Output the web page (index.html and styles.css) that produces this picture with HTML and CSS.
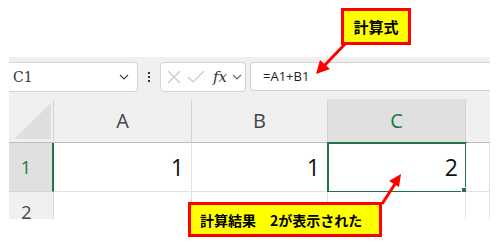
FILE: index.html
```html
<!DOCTYPE html>
<html lang="ja">
<head>
  <meta charset="UTF-8">
  <title>計算式</title>
  <link rel="stylesheet" href="styles.css">
</head>
<body>
  <div class="sheet">
    <div class="formula-row">
      <div class="name-box">
        <span>C1</span>
        <svg class="chev" width="10" height="6" viewBox="0 0 10 6"><path d="M1 1l4 4 4-4" fill="none" stroke="#444" stroke-width="1.2"/></svg>
      </div>
      <div class="dots"><i></i><i></i><i></i></div>
      <div class="fx-box">
        <svg width="16" height="16" viewBox="0 0 16 16"><path d="M2 2l12 12M14 2L2 14" stroke="#c8c8c8" stroke-width="1.2"/></svg>
        <svg width="18" height="16" viewBox="0 0 18 16"><path d="M1 8l5 5L17 2" fill="none" stroke="#c8c8c8" stroke-width="1.2"/></svg>
        <span class="fx">fx</span>
        <svg width="10" height="6" viewBox="0 0 10 6"><path d="M1 1l4 4 4-4" fill="none" stroke="#666" stroke-width="1.1"/></svg>
      </div>
      <div class="formula-input">=A1+B1</div>
    </div>

    <div class="grid">
      <div class="corner"><div class="tri"></div></div>
      <div class="col-head">A</div>
      <div class="col-head">B</div>
      <div class="col-head selected">C</div>
      <div class="col-head blank"></div>

      <div class="row-head selected">1</div>
      <div class="cell">1</div>
      <div class="cell">1</div>
      <div class="cell active">2<span class="handle"></span></div>
      <div class="cell"></div>

      <div class="row-head">2</div>
      <div class="cell"></div>
      <div class="cell"></div>
      <div class="cell"></div>
      <div class="cell"></div>
    </div>
  </div>

  <div class="callout top-note">計算式</div>
  <div class="callout result-note">計算結果　2が表示された</div>

  <svg class="arrows" width="499" height="245" viewBox="0 0 499 245">
    <line x1="345" y1="44" x2="324" y2="66" stroke="#ff0000" stroke-width="3"/>
    <polygon points="316,74 320,60 330,69" fill="#ff0000"/>
    <line x1="382" y1="204" x2="395" y2="184" stroke="#ff0000" stroke-width="3"/>
    <polygon points="401,174 389,181 399,187" fill="#ff0000"/>
  </svg>
</body>
</html>
```

FILE: styles.css
```css
body {
  margin: 0;
  width: 499px;
  height: 245px;
  background: #fff;
  font-family: "Open Sans", "Noto Sans CJK JP", sans-serif;
  position: relative;
  overflow: hidden;
}

.sheet {
  margin: 57px 0 0 9px;
  width: 481px;
  height: 162px;
  background: #f0f0f0;
  overflow: hidden;
}

.formula-row {
  height: 42px;
  display: flex;
  align-items: flex-start;
  padding-top: 5px;
  box-sizing: border-box;
}

.name-box {
  width: 129px;
  height: 30px;
  box-sizing: border-box;
  background: #fff;
  border: 1px solid #d4d4d4;
  border-left: none;
  border-radius: 0 4px 4px 0;
  display: flex;
  align-items: center;
  justify-content: space-between;
  padding: 0 8px 0 4px;
  font-family: "DejaVu Serif", serif;
  font-size: 14px;
  color: #333;
}

.dots {
  width: 22px;
  height: 30px;
  display: flex;
  flex-direction: column;
  align-items: center;
  justify-content: center;
  gap: 2px;
}

.dots i {
  width: 2px;
  height: 2px;
  background: #333;
}

.fx-box {
  width: 86px;
  height: 30px;
  box-sizing: border-box;
  background: #fff;
  border: 1px solid #d4d4d4;
  border-radius: 4px;
  display: flex;
  align-items: center;
  gap: 5px;
  padding-left: 5px;
}

.fx {
  font-family: "DejaVu Serif", serif;
  font-style: italic;
  font-size: 15px;
  color: #333;
  margin-left: 3px;
}

.formula-input {
  flex: 1;
  margin-left: 4px;
  height: 29px;
  box-sizing: border-box;
  background: #fff;
  border: 1px solid #d4d4d4;
  border-right: none;
  border-radius: 4px 0 0 4px;
  padding-left: 12px;
  line-height: 27px;
  font-size: 13px;
  color: #222;
}

.grid {
  display: grid;
  grid-template-columns: 45px 138px 136px 138px 24px;
  grid-template-rows: 44px 49px 40px;
}

.corner {
  border-right: 1px solid #d4d4d4;
  border-bottom: 1px solid #bdbdbd;
  position: relative;
}

.tri {
  position: absolute;
  left: 5px;
  top: 4px;
  width: 37px;
  height: 36px;
  background: #dedede;
  clip-path: polygon(100% 0, 100% 100%, 0 100%);
}

.col-head {
  border-right: 1px solid #d4d4d4;
  border-bottom: 1px solid #bdbdbd;
  display: flex;
  align-items: center;
  justify-content: center;
  font-size: 20px;
  color: #444;
}

.col-head.selected {
  background: #e0e0e0;
  color: #217346;
}

.col-head.blank {
  border-right: none;
}

.row-head {
  border-right: 1px solid #d4d4d4;
  border-bottom: 1px solid #d4d4d4;
  display: flex;
  align-items: center;
  justify-content: center;
  padding-right: 9px;
  font-size: 18px;
  color: #444;
}

.row-head.selected {
  background: #e0e0e0;
  color: #217346;
  border-right: 2px solid #217346;
}

.cell {
  background: #fff;
  border-right: 1px solid #e1e1e1;
  border-bottom: 1px solid #e1e1e1;
  display: flex;
  align-items: center;
  justify-content: flex-end;
  padding-right: 7px;
  font-size: 23px;
  color: #111;
  position: relative;
}

.cell.active {
  outline: 2px solid #217346;
  outline-offset: -1px;
}

.handle {
  position: absolute;
  right: -3px;
  bottom: -3px;
  width: 5px;
  height: 5px;
  background: #217346;
  border: 1px solid #fff;
}

.callout {
  position: absolute;
  box-sizing: border-box;
  background: #ffff00;
  border: 3px solid #ff0000;
  font-family: "Noto Sans CJK JP", sans-serif;
  font-weight: bold;
  font-size: 14px;
  color: #000;
  display: flex;
  align-items: center;
}

.top-note {
  left: 341px;
  top: 8px;
  width: 70px;
  height: 37px;
  justify-content: center;
  font-size: 15px;
}

.result-note {
  left: 188px;
  top: 202px;
  width: 194px;
  height: 35px;
  padding-left: 9px;
}

.arrows {
  position: absolute;
  left: 0;
  top: 0;
}
```
